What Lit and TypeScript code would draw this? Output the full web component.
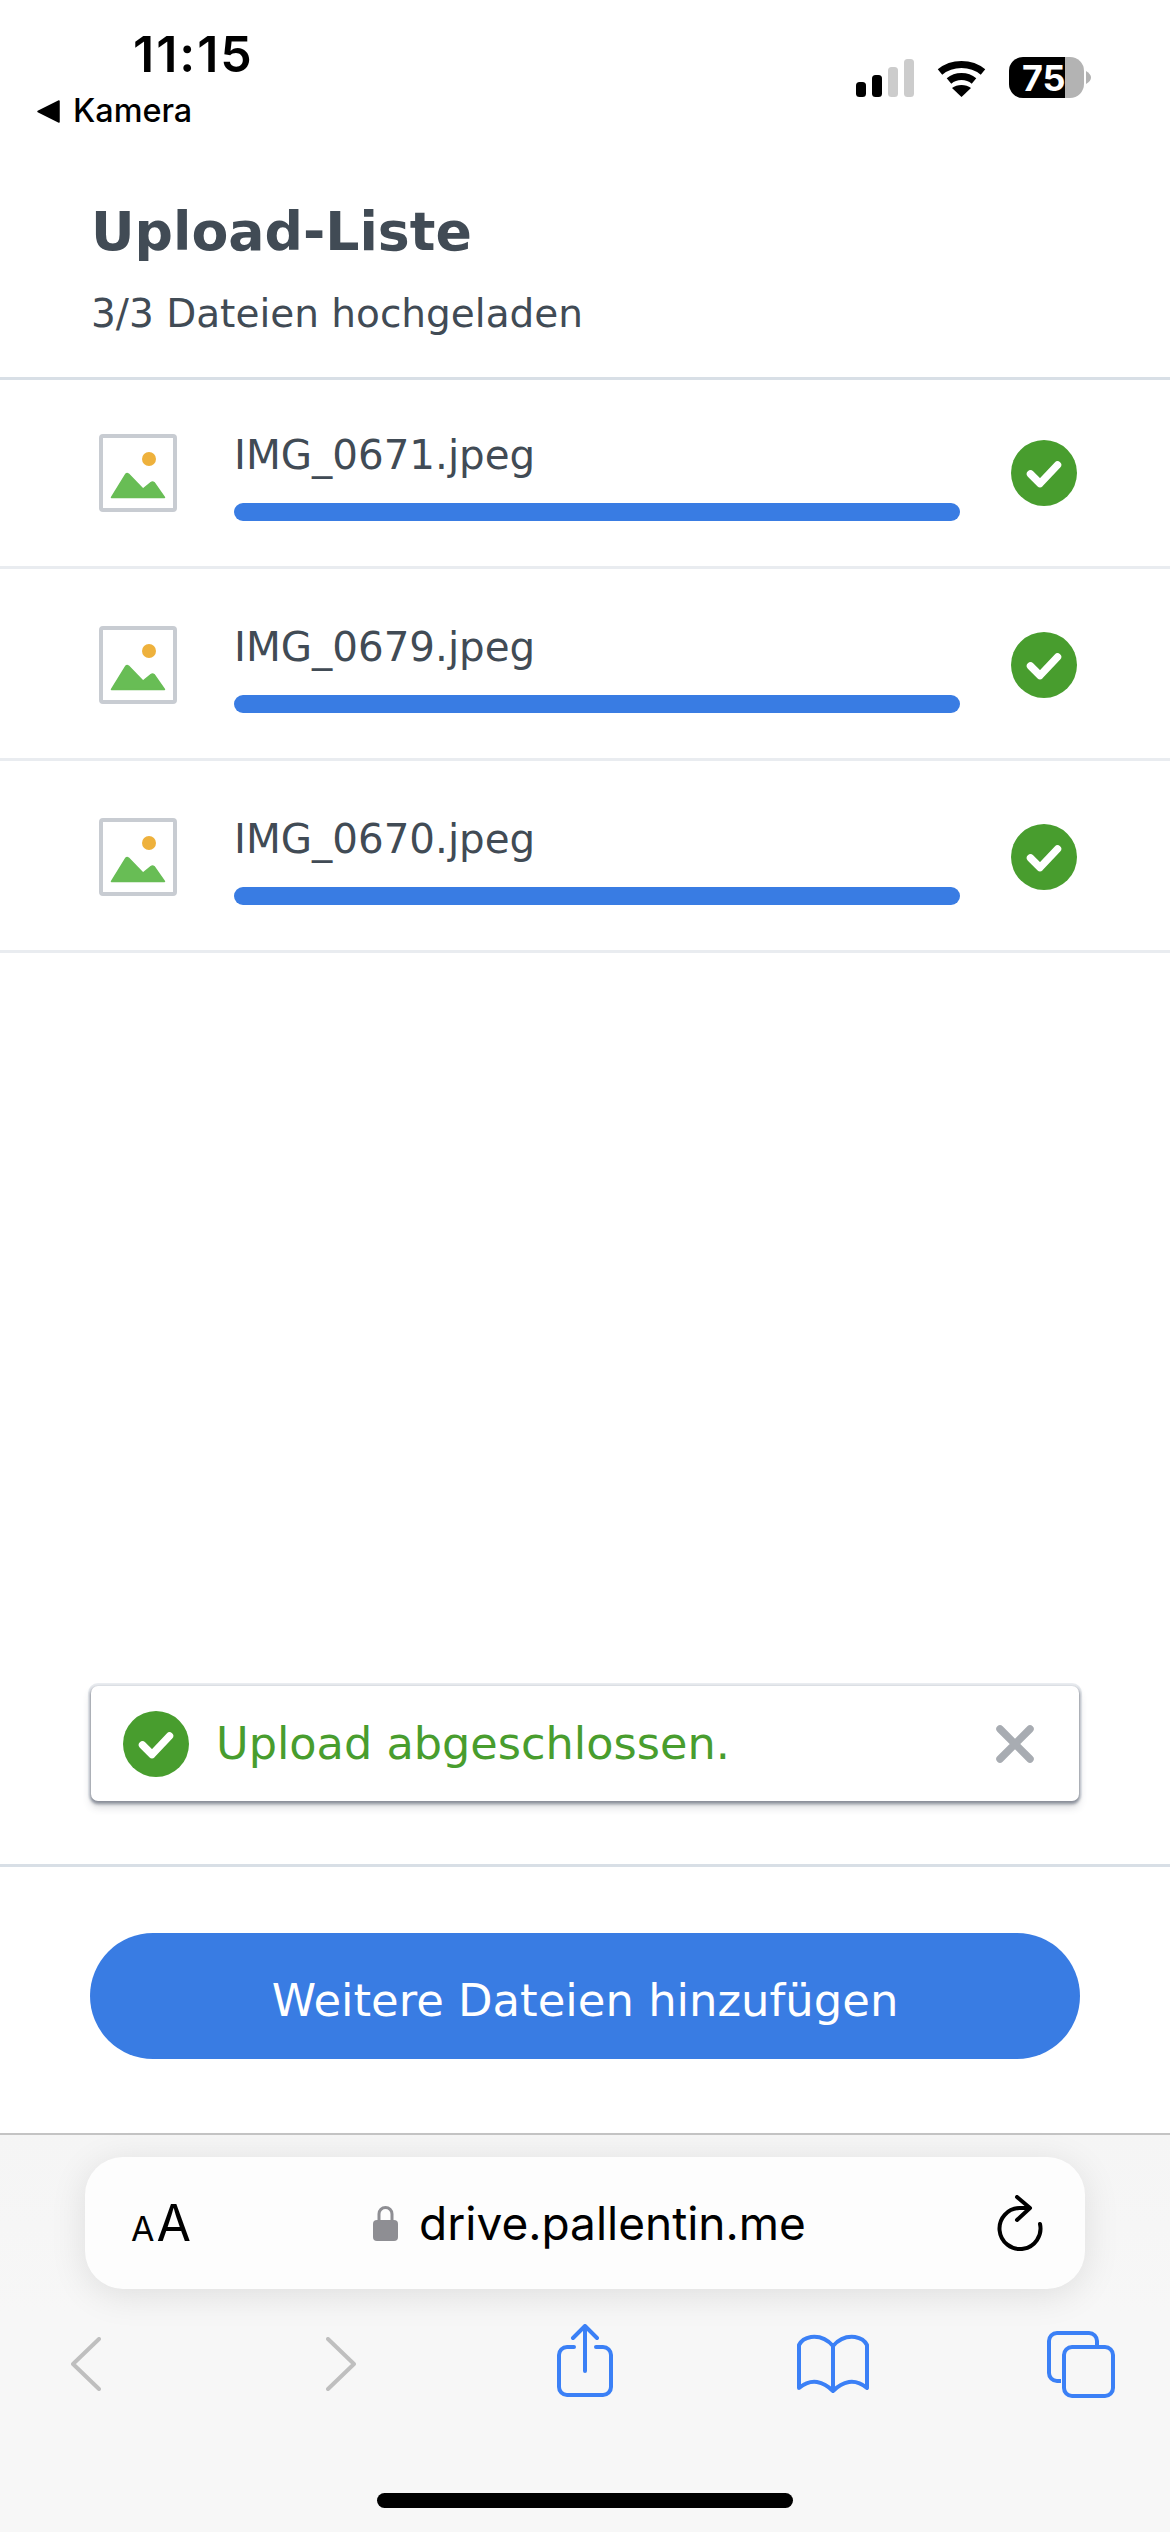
import { LitElement, html, css } from "lit";
import { customElement } from "lit/decorators.js";

const check = html`<svg class="check" viewBox="0 0 66 66"><circle cx="33" cy="33" r="33" fill="#489d2e"/><path d="M19.500 34 L29 43.500 L46.500 25" fill="none" stroke="#fff" stroke-width="7.500" stroke-linecap="round" stroke-linejoin="round"/></svg>`;

const thumb = html`<svg class="thumb" viewBox="0 0 78 78"><rect x="2" y="2" width="74" height="74" rx="2" fill="#fff" stroke="#c8ccd2" stroke-width="4"/><circle cx="50" cy="25" r="7" fill="#eeb13c"/><path d="M12.500 63.500 L27 40 Q28 39 29.500 40 L44 55 L52 48.500 Q53.500 47.500 55 48.500 L65.500 63.500 Z" fill="#68bd55" stroke="#68bd55" stroke-width="1.500" stroke-linejoin="round"/></svg>`;

@customElement("app-root")
export class AppRoot extends LitElement {
  static styles = css`
    :host { display: block; width: 1170px; height: 2532px; background: #fff; font-family: "DejaVu Sans", sans-serif; color: #414b55; overflow: hidden; }
    .page { display: flex; flex-direction: column; height: 2532px; }
    .status { height: 132px; flex: none; display: flex; justify-content: space-between; font-family: Inter, sans-serif; color: #000; }
    .status-left { display: flex; flex-direction: column; padding: 27px 0 0 37px; }
    .time { font-size: 50px; font-weight: 600; line-height: 54px; margin-left: 96px; letter-spacing: 2px; }
    .back { display: flex; align-items: center; gap: 12px; font-size: 32.400px; font-weight: 500; line-height: 36px; margin-top: 12px; }
    .tri { width: 24px; height: 23px; display: block; }
    .status-right { display: flex; align-items: flex-start; padding: 57px 79px 0 0; }
    .signal { width: 58px; height: 38px; margin-top: 2px; display: block; }
    .wifi { width: 51px; height: 38px; margin: 2px 0 0 22px; display: block; }
    .battery { width: 82px; height: 41px; margin-left: 22px; display: block; overflow: visible; }
    .battery text { font: 700 36px Inter, sans-serif; fill: #fff; }
    .header { height: 248px; flex: none; box-sizing: border-box; padding: 68px 91px 0; border-bottom: 3px solid #d8dfe6; }
    h1 { margin: 0; font-size: 53.700px; line-height: 64px; font-weight: 700; }
    .sub { font-size: 39px; line-height: 46px; margin-top: 27px; }
    .row { height: 192px; box-sizing: border-box; display: flex; align-items: center; padding: 2px 90px 0 99px; border-bottom: 3px solid #e9ecf0; }
    .row.first { height: 189px; padding-top: 0; }
    .thumb { width: 78px; height: 78px; flex: none; display: block; }
    .file { width: 726px; margin-left: 57px; margin-right: 51px; flex: none; }
    .name { font-size: 40.400px; line-height: 60px; }
    .bar { height: 18px; margin-top: 18px; border-radius: 9px; background: #397ce3; }
    .check { width: 66px; height: 66px; flex: none; display: block; }
    .spacer { flex: 1; }
    .toast-wrap { padding: 3px 91px 2px; flex: none; }
    .toast { height: 115px; box-sizing: border-box; background: #fff; border-radius: 7px; display: flex; align-items: center; padding: 0 45px 0 32px; box-shadow: 0 2px 3px 1px rgba(60, 66, 80, 0.55), 0 0 0 3px #e9ecf0, 0 6px 8px rgba(60, 66, 80, 0.2); }
    .toast-text { flex: 1; margin-left: 27px; font-size: 44.600px; color: #489d2e; line-height: 60px; }
    .close { width: 38px; height: 38px; display: block; }
    .divider { margin-top: 61px; flex: none; height: 3px; background: #d8dfe6; }
    .action { flex: none; padding: 66px 90px 74px; }
    .btn { height: 126px; display: flex; align-items: center; justify-content: center; border-radius: 63px; background: #397ce3; color: #fff; font-size: 44.900px; padding-top: 8px; box-sizing: border-box; }
    .chrome { flex: none; height: 399px; box-sizing: border-box; background: #f7f7f7; border-top: 2px solid #c4c4c4; background-image: linear-gradient(#f5f5f5, #f7f7f7 180px); padding: 22px 85px 0; display: flex; flex-direction: column; color: #000; }
    .url { height: 132px; flex: none; background: #fdfdfd; border-radius: 38px; box-shadow: 0 6px 36px rgba(0, 0, 0, 0.1); display: flex; align-items: center; padding: 0 39px 0 46px; font-family: Inter, sans-serif; }
    .aa { width: 100px; display: flex; align-items: baseline; font-size: 50px; line-height: 1; }
    .aa small { font-size: 34px; margin-right: 2px; }
    .addr { flex: 1; display: flex; align-items: center; justify-content: center; gap: 21px; font-size: 46px; padding-right: 48px; }
    .lock { width: 25px; height: 36px; display: block; }
    .reload { width: 50px; height: 56px; display: block; }
    .tools { display: flex; align-items: center; margin: 33px 0 0 -14px; height: 78px; flex: none; }
    .tools svg { display: block; flex: none; }
    .tools .c1 { width: 30px; height: 54px; margin-top: 5px; }
    .tools .c2 { width: 30px; height: 54px; margin-left: 225px; margin-top: 5px; }
    .tools .share { width: 56px; height: 74px; margin-left: 201px; }
    .tools .book { width: 72px; height: 60px; margin-left: 184px; margin-top: 6px; }
    .tools .tabs { width: 68px; height: 67px; margin-left: 178px; margin-top: 6px; }
    .home { width: 416px; height: 15px; border-radius: 8px; background: #000; align-self: center; margin-top: 93px; flex: none; }
  `;

  render() {
    const files = ["IMG_0671.jpeg", "IMG_0679.jpeg", "IMG_0670.jpeg"];
    return html`<div class="page">
      <div class="status">
        <div class="status-left">
          <div class="time">11:15</div>
          <div class="back">
            <svg class="tri" viewBox="0 0 24 23"><path d="M22 1 V22 L1 11.500 Z" fill="#000" stroke="#000" stroke-width="1.500" stroke-linejoin="round"/></svg>
            <span>Kamera</span>
          </div>
        </div>
        <div class="status-right">
          <svg class="signal" viewBox="0 0 58 38"><rect x="0" y="23" width="10" height="15" rx="3.500" fill="#000"/><rect x="16" y="16" width="10" height="22" rx="3.500" fill="#000"/><rect x="32" y="8" width="10" height="30" rx="3.500" fill="#ccc"/><rect x="48" y="0" width="10" height="38" rx="3.500" fill="#ccc"/></svg>
          <svg class="wifi" viewBox="0 0 51 38"><path d="M4 13 C16 3 35 3 47 13" fill="none" stroke="#000" stroke-width="7"/><path d="M13 22 C20 16 31 16 38 22" fill="none" stroke="#000" stroke-width="7"/><path d="M16 29 C21 25 30 25 35 29 L25.500 38 Z" fill="#000"/></svg>
          <svg class="battery" viewBox="0 0 82 41"><path d="M14 0 H56 V41 H14 A14 14 0 0 1 0 27 V14 A14 14 0 0 1 14 0 Z" fill="#000"/><path d="M56 0 H61 A14 14 0 0 1 75 14 V27 A14 14 0 0 1 61 41 H56 Z" fill="#b3b3b3"/><path d="M77 14 Q82 17 82 20.500 Q82 24 77 27 Z" fill="#b3b3b3"/><text x="13" y="34">75</text></svg>
        </div>
      </div>
      <div class="header">
        <h1>Upload-Liste</h1>
        <div class="sub">3/3 Dateien hochgeladen</div>
      </div>
      ${files.map((f, i) => html`<div class="row ${i === 0 ? "first" : ""}">
        ${thumb}
        <div class="file"><div class="name">${f}</div><div class="bar"></div></div>
        ${check}
      </div>`)}
      <div class="spacer"></div>
      <div class="toast-wrap">
        <div class="toast">
          ${check}
          <div class="toast-text">Upload abgeschlossen.</div>
          <svg class="close" viewBox="0 0 38 38"><path d="M4 4 L34 34 M34 4 L4 34" stroke="#a8acb2" stroke-width="7.500" stroke-linecap="round"/></svg>
        </div>
      </div>
      <div class="divider"></div>
      <div class="action"><div class="btn">Weitere Dateien hinzufügen</div></div>
      <div class="chrome">
        <div class="url">
          <div class="aa"><small>A</small>A</div>
          <div class="addr">
            <svg class="lock" viewBox="0 0 25 36"><path d="M6 17 V9 A6.500 6.500 0 0 1 19 9 V17" fill="none" stroke="#8e8e93" stroke-width="3"/><rect x="0" y="15" width="25" height="21" rx="4" fill="#8e8e93"/></svg>
            <span>drive.pallentin.me</span>
          </div>
          <svg class="reload" viewBox="0 0 50 56"><path d="M44 29 A20.500 20.500 0 1 1 23.500 13 L30 13" fill="none" stroke="#000" stroke-width="4" stroke-linecap="round"/><path d="M21 2 L34 13 L21 25" fill="none" stroke="#000" stroke-width="4" stroke-linecap="round" stroke-linejoin="round"/></svg>
        </div>
        <div class="tools">
          <svg class="c1" viewBox="0 0 30 54"><path d="M28 2 L2 27 L28 52" fill="none" stroke="#bfbfbf" stroke-width="4" stroke-linecap="round" stroke-linejoin="round"/></svg>
          <svg class="c2" viewBox="0 0 30 54"><path d="M2 2 L28 27 L2 52" fill="none" stroke="#bfbfbf" stroke-width="4" stroke-linecap="round" stroke-linejoin="round"/></svg>
          <svg class="share" viewBox="0 0 56 74"><path d="M17 23 H10 A8 8 0 0 0 2 31 V63 A8 8 0 0 0 10 71 H46 A8 8 0 0 0 54 63 V31 A8 8 0 0 0 46 23 H39" fill="none" stroke="#3b80f6" stroke-width="4" stroke-linecap="round"/><path d="M28 47 V3 M16 14 L28 2 L40 14" fill="none" stroke="#3b80f6" stroke-width="4" stroke-linecap="round" stroke-linejoin="round"/></svg>
          <svg class="book" viewBox="0 0 72 60"><path d="M36 12 C30 5 22 2 14 3 C8 4 4 7 2 11 V54 C8 49 13 47 20 48 C26 49 32 53 36 57 C40 53 46 49 52 48 C59 47 64 49 70 54 V11 C68 7 64 4 58 3 C50 2 42 5 36 12 V57" fill="none" stroke="#3b80f6" stroke-width="4" stroke-linecap="round" stroke-linejoin="round"/></svg>
          <svg class="tabs" viewBox="0 0 68 67"><path d="M14 50 H10 A8 8 0 0 1 2 42 V10 A8 8 0 0 1 10 2 H42 A8 8 0 0 1 50 10 V16" fill="none" stroke="#3b80f6" stroke-width="4"/><rect x="17" y="16" width="49" height="49" rx="8" fill="none" stroke="#3b80f6" stroke-width="4"/></svg>
        </div>
        <div class="home"></div>
      </div>
    </div>`;
  }
}
